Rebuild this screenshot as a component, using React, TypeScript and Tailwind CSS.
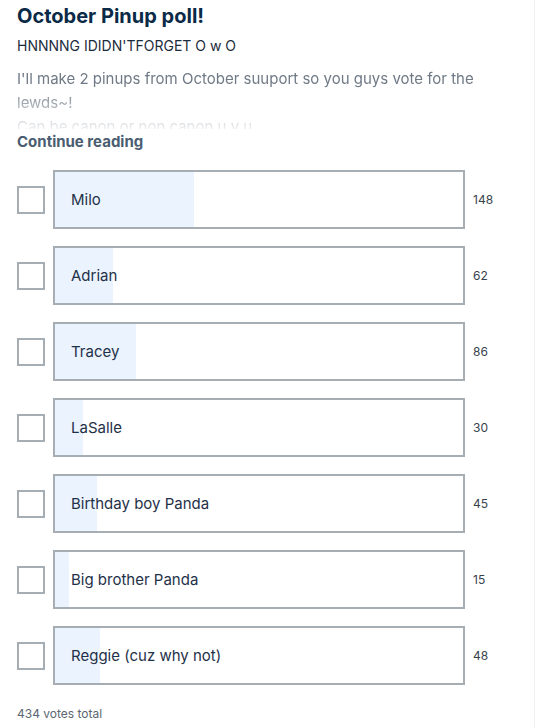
import React from 'react'

const options = [
  { label: 'Milo', votes: 148 },
  { label: 'Adrian', votes: 62 },
  { label: 'Tracey', votes: 86 },
  { label: 'LaSalle', votes: 30 },
  { label: 'Birthday boy Panda', votes: 45 },
  { label: 'Big brother Panda', votes: 15 },
  { label: 'Reggie (cuz why not)', votes: 48 },
]

export default function App() {
  const total = options.reduce((s, o) => s + o.votes, 0)
  return (
    <div className="w-[538px] h-[728px] bg-white overflow-hidden" style={{ fontFamily: 'Inter, "Liberation Sans", sans-serif' }}>
      <div className="h-full mr-[3px] border-r border-[#eef0f2] pl-[17px] pr-[29px]">
        <h1 className="pt-[3px] text-[20px] leading-[26px] font-bold text-[#0b2a47]">October Pinup poll!</h1>
        <p className="mt-[7px] text-[14px] leading-[20px] text-[#1d2c3c]">HNNNNG IDIDN'TFORGET O w O</p>

        <div className="mt-[11px] h-[62px] overflow-hidden text-[15px] leading-[24px] text-[#6f7a86] [mask-image:linear-gradient(to_bottom,black_30%,rgba(0,0,0,0.12)_100%)]">
          <p>I'll make 2 pinups from October suuport so you guys vote for the lewds~!</p>
          <p>Can be canon or non canon u v u</p>
        </div>
        <button className="block mt-[3px] text-[15px] leading-[20px] font-bold text-[#4a5d71]">Continue reading</button>

        <ul className="mt-[18px] flex flex-col gap-[17px]">
          {options.map(o => (
            <li key={o.label} className="flex items-center">
              <span className="w-[28px] h-[28px] border-2 border-[#a6adb3] bg-white shrink-0" />
              <div className="relative ml-[8px] w-[412px] h-[59px] border-2 border-[#a6adb3] flex items-center overflow-hidden">
                <div className="absolute left-0 top-0 bottom-0 bg-[#ebf3fe]" style={{ width: `${(o.votes / total) * 100}%` }} />
                <span className="relative pl-[16px] pt-[2px] text-[15px] text-[#1f3148]">{o.label}</span>
              </div>
              <span className="ml-[8px] text-[12px] text-[#38424d]">{o.votes}</span>
            </li>
          ))}
        </ul>

        <p className="mt-[20px] text-[12px] text-[#5b6672]">{total} votes total</p>
      </div>
    </div>
  )
}
